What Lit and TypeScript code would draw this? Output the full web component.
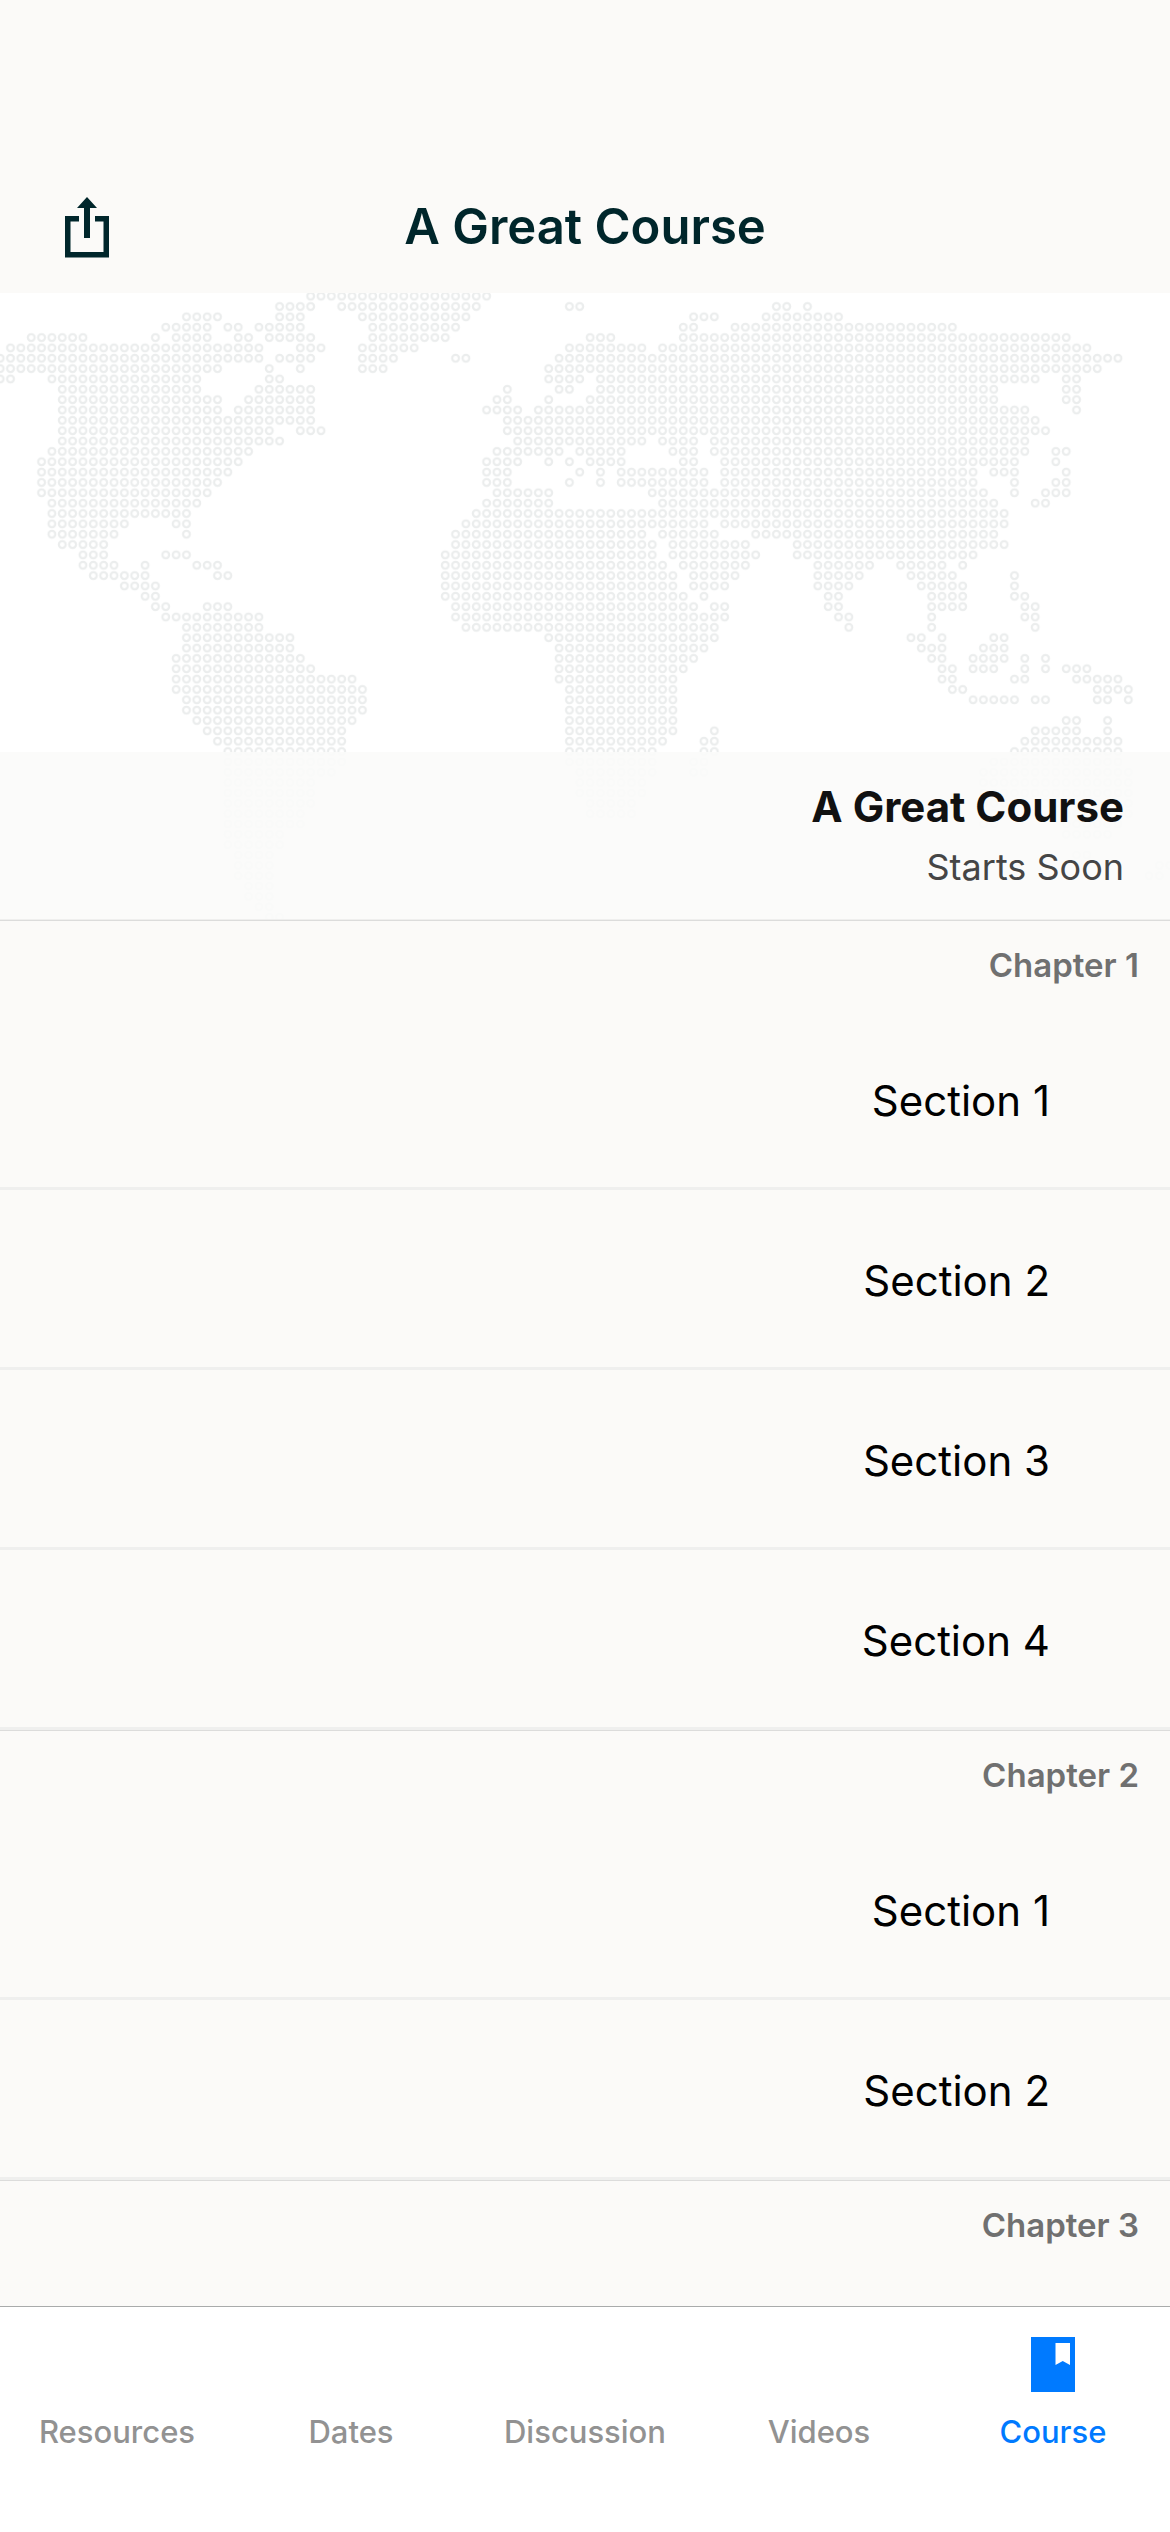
import { LitElement, html, css, svg } from "lit";
import { customElement } from "lit/decorators.js";

/** Distance between neighbouring dots of the world map. */
const PITCH = 10.35;

/** Land cells of the map, one entry per dot row, as inclusive column ranges. */
const LAND = [
  "30-47",
  "27-30 33-46 55-56 75-76 78",
  "18-21 27-29 35-45 67-69 74-81",
  "16-20 22-23 25-29 36-44 66-67 71-92",
  "3-8 15 17-20 23-24 26-30 36-43 57-59 66-103",
  "1-25 29-31 35-40 55-62 64-105",
  "0-25 27-30 35-38 44-45 54-108",
  "0-21 26 29 35-37 53-106",
  "0-1 5-19 26-27 53-56 58-100 103-104",
  "6-19 25-30 49 54-55 58-96 103-104",
  "6-21 24-30 48-49 53 57-96 103-104",
  "6-21 23-30 47-50 52-99 104",
  "6-30 49-100",
  "6-26 29-31 49-101",
  "6-27 50-62 64-67 69-99",
  "5-24 48-54 56-60 65-67 69-99 102-103",
  "4-23 47-50 53 55 57-60 66-67 70-98 102",
  "4-22 47-49 56 58 60-68 70-94 96-98 103",
  "4-21 47-49 55 58 60-68 70-94 98 102-103",
  "4-20 48-53 63-95 98 101-103",
  "5-19 47-53 64-96 100-101",
  "5-18 46-97",
  "5-12 17-18 45-68 70-97",
  "5-11 18 44-62 64-69 73-96",
  "6-10 44-63 65-72 77-97",
  "8-10 16-18 43-63 65-73 77-94",
  "8-11 14 19-21 43-64 66-72 79-84 87-91 93",
  "9-14 21-22 43-65 67-71 79-83 88-92 98",
  "12-15 43-65 67-70 79-82 89-93 98",
  "14-15 43-66 68 80-81 90-93 98-99",
  "15-16 20-22 44-67 69-70 80-81 90-93 99-100",
  "16-25 44-70 81-82 90 99-100",
  "18-25 45-69 82 90 100",
  "18-28 53-69 88-89 91 96-97",
  "18-28 54-68 89-91 95-97",
  "17-29 54-67 90-91 94-97 99 101",
  "17-30 54-66 91-92 94-96 99 101 103-105",
  "17-34 54-65 91-92 98-99 104-108",
  "17-35 55-65 92-93 106-109",
  "18-35 55-65 94-98 100-101 106-107 109",
  "18-35 55-65",
  "19-34 55-65 103-104 107",
  "20-33 55-65 69 100-104 107",
  "21-33 55-64 68-69 99-108",
  "22-33 55-63 68-69 98-108",
  "22-33 55-63 67-68 96-108",
  "22-32 56-63 67-68 95-109",
  "22-30 56-62 95-109",
  "22-30 56-62 95-109",
  "22-30 57-61 95-109",
  "22-29 57-61 95-98 103-109",
  "22-29 95-96 103-108",
  "22-27 103-107",
  "22-27",
  "23-26 104-105",
  "23-26 112-113",
  "23-26 111-112",
  "24-26",
  "24-26",
  "25-26",
  "26-27",
];

const landPath = LAND.map((row, y) =>
  row
    .split(" ")
    .map((range) => {
      const [from, to = from] = range.split("-").map(Number);
      const width = (to - from + 1) * PITCH;
      return `M${from * PITCH} ${y * PITCH}h${width}v${PITCH}h${-width}z`;
    })
    .join("")
).join("");

const chapters = [
  { title: "Chapter 1", sections: ["Section 1", "Section 2", "Section 3", "Section 4"] },
  { title: "Chapter 2", sections: ["Section 1", "Section 2"] },
  { title: "Chapter 3", sections: [] },
];

const tabs = ["Resources", "Dates", "Discussion", "Videos", "Course"];

@customElement("world-map")
class WorldMap extends LitElement {
  static styles = css`
    :host {
      display: block;
    }
    .map {
      display: block;
      width: 100%;
      height: 100%;
    }
  `;

  render() {
    return html`<svg
      class="map"
      viewBox="0 0 1170 626"
      preserveAspectRatio="xMidYMin slice"
      aria-hidden="true"
    >
      ${svg`
        <defs>
          <pattern id="ring" width=${PITCH} height=${PITCH} patternUnits="userSpaceOnUse">
            <circle cx="5.175" cy="5.175" r="3.4" fill="none" stroke="#ebeded" stroke-width="2.2" />
          </pattern>
        </defs>
        <path transform="translate(-5 -2)" d=${landPath} fill="url(#ring)" />
      `}
    </svg>`;
  }
}

@customElement("app-root")
class AppRoot extends LitElement {
  static styles = css`
    :host {
      display: flex;
      flex-direction: column;
      height: 100vh;
      overflow: hidden;
      background: #fbfaf8;
      color: #000;
      font-family: Inter, "Liberation Sans", sans-serif;
    }
    h1,
    h2,
    h3,
    p,
    ul {
      margin: 0;
      padding: 0;
      font-weight: inherit;
    }
    ul {
      list-style: none;
    }
    .bar {
      flex: none;
      display: grid;
      grid-template-columns: 1fr auto 1fr;
      align-items: center;
      padding: 161px 60px 0;
      height: 132px;
    }
    .share {
      justify-self: start;
      display: flex;
      padding: 0 5px;
      border: 0;
      background: none;
      color: #00262b;
    }
    .share-icon {
      width: 44px;
      height: 61px;
    }
    .bar-title {
      font-size: 49px;
      line-height: 60px;
      font-weight: 600;
      color: #00262b;
    }
    .scroll {
      flex: 1;
      min-height: 0;
      overflow: hidden;
    }
    .hero {
      display: grid;
      background: #fff;
      border-bottom: 1px solid #efefee;
    }
    .hero-map {
      grid-area: 1 / 1;
      height: 626px;
    }
    .hero-info {
      grid-area: 1 / 1;
      align-self: end;
      z-index: 1;
      display: grid;
      gap: 6px;
      padding: 28px 46px 25px;
      background: rgba(251, 251, 249, 0.9);
      text-align: right;
    }
    .hero-title {
      font-size: 42px;
      line-height: 54px;
      font-weight: 700;
      color: #111;
    }
    .hero-date {
      font-size: 36px;
      line-height: 54px;
      color: #454545;
    }
    .chapter-title {
      box-sizing: border-box;
      height: 90px;
      padding: 0 31px;
      border-top: 1px solid #dcdcdb;
      font-size: 33px;
      line-height: 88px;
      font-weight: 600;
      text-align: right;
      color: #707070;
    }
    .section {
      box-sizing: border-box;
      height: 180px;
      display: flex;
      border-bottom: 3px solid #efefee;
    }
    .section-link {
      flex: 1;
      display: flex;
      align-items: center;
      justify-content: flex-end;
      padding: 4px 120px 0;
      font-size: 42px;
      line-height: 54px;
      color: #000;
      text-decoration: none;
    }
    .tabs {
      flex: none;
      display: grid;
      grid-template-columns: repeat(5, 1fr);
      box-sizing: border-box;
      height: 226px;
      border-top: 1px solid #a9abab;
      background: #fff;
    }
    .tab {
      display: flex;
      flex-direction: column;
      align-items: center;
      justify-content: flex-end;
      gap: 20px;
      padding: 0 0 80px;
      border: 0;
      background: none;
      font: 500 31px/40px Inter, "Liberation Sans", sans-serif;
      color: #929292;
    }
    .tab-current {
      color: #007aff;
    }
    .tab-icon {
      width: 44px;
      height: 55px;
    }
  `;

  render() {
    return html`
      <header class="bar">
        <button class="share" type="button" aria-label="Share">
          <svg class="share-icon" viewBox="0 0 44 61" fill="currentColor" aria-hidden="true">
            <path d="M22 0L32 11H25V41H19V11H12z" />
            <path d="M0 19H14V24.500H5.500V55H38.500V24.500H30V19H44V60.500H0z" />
          </svg>
        </button>
        <h1 class="bar-title">A Great Course</h1>
      </header>
      <main class="scroll">
        <section class="hero">
          <world-map class="hero-map"></world-map>
          <div class="hero-info">
            <h2 class="hero-title">A Great Course</h2>
            <p class="hero-date">Starts Soon</p>
          </div>
        </section>
        ${chapters.map(
          (chapter) => html`<section class="chapter">
            <h3 class="chapter-title">${chapter.title}</h3>
            <ul>
              ${chapter.sections.map(
                (name) => html`<li class="section"><a class="section-link" href="#">${name}</a></li>`
              )}
            </ul>
          </section>`
        )}
      </main>
      <nav class="tabs">
        ${tabs.map((name) =>
          name === "Course"
            ? html`<button class="tab tab-current" type="button" aria-current="page">
                <svg class="tab-icon" viewBox="0 0 44 55" fill="currentColor" aria-hidden="true">
                  <path fill-rule="evenodd" d="M0 0H44V55H0zM24.500 6V28L31.750 24L39 28V6z" />
                </svg>
                ${name}
              </button>`
            : html`<button class="tab" type="button">${name}</button>`
        )}
      </nav>
    `;
  }
}
